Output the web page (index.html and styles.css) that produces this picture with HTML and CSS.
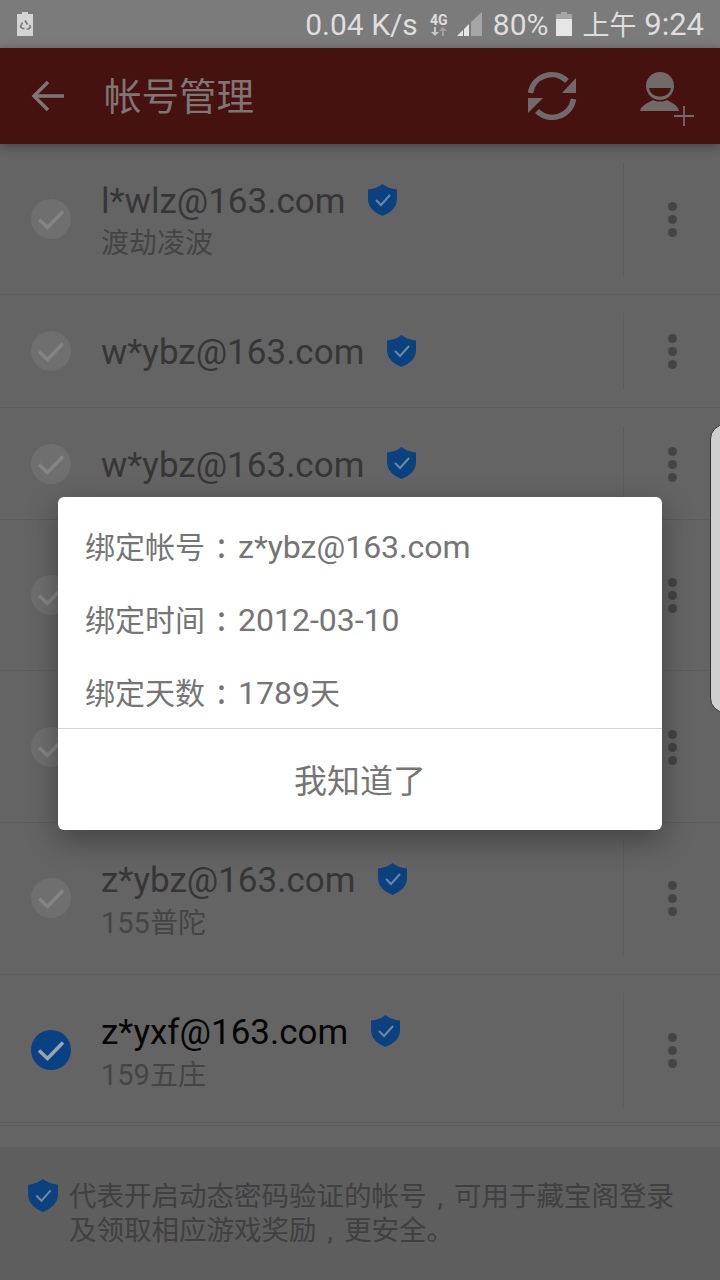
FILE: index.html
```html
<!DOCTYPE html>
<html lang="zh-CN">
<head>
    <meta charset="UTF-8">
    <meta name="viewport" content="width=device-width, initial-scale=1.0">
    <title>帐号管理</title>
    <link rel="stylesheet" href="styles.css">
</head>
<body>
<svg class="defs" width="0" height="0">
    <symbol id="shield" viewBox="0 0 29 32">
        <path d="M14.500 0C18 3 23 5 29 5.500V15C29 23 23 28.500 14.500 32C6 28.500 0 23 0 15V5.500C6 5 11 3 14.500 0Z" fill="currentColor"/>
        <path d="M8 16l5 5 9-10" fill="none" stroke="#6d87a5" stroke-width="2"/>
    </symbol>
    <symbol id="check" viewBox="0 0 40 40">
        <circle cx="20" cy="20" r="20" fill="currentColor"/>
        <path d="M8 20.500l8.500 8L32 12.500" fill="none" stroke="var(--tick)" stroke-width="3.600"/>
    </symbol>
</svg>

<div class="status">
    <svg class="recycle" width="16" height="24" viewBox="0 0 16 24">
        <path d="M5 0h6v2h5v22H0V2h5z" fill="#d4d4d4"/>
        <path d="M8 8.500l2.500 4M5.500 10.500l-2 4 2 2h2M12.500 13l1 2-2 2h-2" fill="none" stroke="#777" stroke-width="1.600"/>
    </svg>
    <div class="status-right">
        <span>0.04 K/s</span>
        <div class="net">
            <span class="net-label">4G</span>
            <svg width="16" height="9" viewBox="0 0 16 9">
                <path d="M3 0h2v5h3L4 9 0 5h3z" fill="#c8c8c8"/>
                <path d="M11 9h2V4h3l-4-4-4 4h3z" fill="#a0a0a0"/>
            </svg>
        </div>
        <svg class="signal" width="25" height="24" viewBox="0 0 25 24">
            <path d="M14 24V10L25 0v24z" fill="#a6a6a6"/>
            <path d="M0 24l6-6v6zM7 24v-7l5-5v12z" fill="#e6e6e6"/>
        </svg>
        <span class="battery-pct">80%</span>
        <svg class="battery" width="16" height="24" viewBox="0 0 16 24">
            <path d="M5 0h6v2h5v5H0V2h5z" fill="#a6a6a6"/>
            <path d="M0 7h16v17H0z" fill="#e6e6e6"/>
        </svg>
        <span class="clock"><span class="clock-cjk">上午</span> 9:24</span>
    </div>
</div>

<div class="header">
    <svg class="back" width="34" height="32" viewBox="0 0 34 32">
        <path d="M33 16H3M17 2L3 16l14 14" fill="none" stroke="#7f7674" stroke-width="3.500"/>
    </svg>
    <div class="title">帐号管理</div>
    <svg class="refresh" width="50" height="50" viewBox="0 0 50 50">
        <path d="M3.500 22A21.500 21.500 0 0 1 40 10" fill="none" stroke="#716a69" stroke-width="5.500"/>
        <path d="M46.500 28A21.500 21.500 0 0 1 10 40" fill="none" stroke="#716a69" stroke-width="5.500"/>
        <path d="M49 7v15H35zM1 42V27h15z" fill="#716a69"/>
    </svg>
    <svg class="add-user" width="56" height="56" viewBox="0 0 56 56">
        <circle cx="20" cy="14" r="14" fill="#716a69"/>
        <path d="M9 16H31C30 22 25 24.500 20 24.500C15 24.500 10 22 9 16z" fill="#46120f"/>
        <path d="M0 39C1 33 8 31 13 28C17 30 23 30 27 28C32 31 38 33 39 39z" fill="#716a69"/>
        <path d="M44 34v20M34 44h20" fill="none" stroke="#716a69" stroke-width="1.800"/>
    </svg>
</div>

<div class="list">
    <div class="row row-tall">
        <svg class="check"><use href="#check"/></svg>
        <div class="info">
            <div class="email-line"><span class="email">l*wlz@163.com</span><svg class="shield"><use href="#shield"/></svg></div>
            <div class="sub">渡劫凌波</div>
        </div>
        <div class="more"><i></i><i></i><i></i></div>
    </div>
    <div class="row">
        <svg class="check"><use href="#check"/></svg>
        <div class="info">
            <div class="email-line"><span class="email">w*ybz@163.com</span><svg class="shield"><use href="#shield"/></svg></div>
        </div>
        <div class="more"><i></i><i></i><i></i></div>
    </div>
    <div class="row row-short">
        <svg class="check"><use href="#check"/></svg>
        <div class="info">
            <div class="email-line"><span class="email">w*ybz@163.com</span><svg class="shield"><use href="#shield"/></svg></div>
        </div>
        <div class="more"><i></i><i></i><i></i></div>
    </div>
    <div class="row row-tall">
        <svg class="check"><use href="#check"/></svg>
        <div class="info"></div>
        <div class="more"><i></i><i></i><i></i></div>
    </div>
    <div class="row row-wide">
        <svg class="check"><use href="#check"/></svg>
        <div class="info"></div>
        <div class="more"><i></i><i></i><i></i></div>
    </div>
    <div class="row row-wide row-pad">
        <svg class="check"><use href="#check"/></svg>
        <div class="info">
            <div class="email-line"><span class="email">z*ybz@163.com</span><svg class="shield"><use href="#shield"/></svg></div>
            <div class="sub"><span class="num">155</span>普陀</div>
        </div>
        <div class="more"><i></i><i></i><i></i></div>
    </div>
    <div class="row row-tall selected">
        <svg class="check"><use href="#check"/></svg>
        <div class="info">
            <div class="email-line"><span class="email">z*yxf@163.com</span><svg class="shield"><use href="#shield"/></svg></div>
            <div class="sub"><span class="num">159</span>五庄</div>
        </div>
        <div class="more"><i></i><i></i><i></i></div>
    </div>
</div>

<div class="footer">
    <svg class="footer-shield"><use href="#shield"/></svg>
    <div class="footer-text">
        <div>代表开启动态密码验证的帐号<span class="comma">,</span>可用于藏宝阁登录</div>
        <div>及领取相应游戏奖励<span class="comma">,</span>更安全。</div>
    </div>
</div>

<div class="edge-panel"></div>

<div class="dialog">
    <div class="dialog-body">
        <div class="dialog-line">绑定帐号<span class="colon">:</span><span class="val">z*ybz@163.com</span></div>
        <div class="dialog-line">绑定时间<span class="colon">:</span><span class="val">2012-03-10</span></div>
        <div class="dialog-line">绑定天数<span class="colon">:</span><span class="val">1789</span>天</div>
    </div>
    <div class="dialog-btn">我知道了</div>
</div>
</body>
</html>
```

FILE: styles.css
```css
* {
    margin: 0;
    padding: 0;
    box-sizing: border-box;
}
body {
    position: relative;
    width: 720px;
    height: 1280px;
    overflow: hidden;
    background: #646464;
    font-family: Roboto, "Noto Sans CJK SC", sans-serif;
}
.defs {
    position: absolute;
}
.status {
    height: 48px;
    background: #7b7b7b;
    color: #dedede;
    font-size: 30px;
    line-height: 44px;
    display: flex;
    align-items: center;
    justify-content: space-between;
    padding: 0 16px 0 17px;
}
.status-right {
    display: flex;
    align-items: center;
}
.status-right > span {
    padding-top: 2px;
}
.net {
    margin-left: 12px;
    display: flex;
    flex-direction: column;
    align-items: center;
    width: 18px;
}
.net-label {
    font-size: 14px;
    font-weight: 700;
    line-height: 14px;
}
.signal {
    margin-left: 9px;
}
.battery-pct {
    margin-left: 11px;
}
.battery {
    margin-left: 7px;
}
.clock {
    margin-left: 11px;
    font-size: 31px;
}
.clock-cjk {
    font-size: 27px;
}
.header {
    position: relative;
    height: 96px;
    background: #46120f;
    display: flex;
    align-items: center;
    padding-left: 31px;
    box-shadow: 0 2px 10px rgba(0, 0, 0, 0.35);
}
.title {
    margin-left: 39px;
    font-size: 37.500px;
    line-height: 44px;
    margin-top: 2px;
    color: #7f7674;
}
.refresh {
    margin-left: 273px;
}
.add-user {
    margin-left: 63px;
    margin-top: 8px;
}
.row {
    height: 113px;
    display: flex;
    align-items: center;
    border-bottom: 1px solid #5c5c5c;
    color: #363636;
    --tick: #848484;
}
.row-short {
    height: 112px;
}
.row-tall {
    height: 151px;
}
.row-wide {
    height: 152px;
}
.row-pad {
    padding-bottom: 1px;
}
.check {
    width: 40px;
    height: 40px;
    margin-left: 31px;
    color: #6f6f6f;
    flex-shrink: 0;
}
.info {
    flex: 1;
    margin-left: 30px;
    padding-top: 4px;
}
.email-line {
    display: flex;
    align-items: center;
}
.email {
    font-size: 35px;
    line-height: 46px;
}
.shield {
    width: 29px;
    height: 32px;
    margin-left: 23px;
    margin-top: -5px;
    color: #0c4180;
}
.sub {
    font-size: 28px;
    height: 38px;
    line-height: 38px;
    color: #444;
}
.num {
    font-size: 29px;
}
.more {
    width: 97px;
    align-self: stretch;
    margin: 18px 0 17px;
    border-left: 1px solid #5c5c5c;
    display: flex;
    flex-direction: column;
    align-items: center;
    justify-content: center;
    gap: 4px;
}
.more i {
    width: 9px;
    height: 9px;
    border-radius: 50%;
    background: #444;
}
.selected {
    box-shadow: inset 0 -2px 0 #646464, inset 0 -3px 0 #5c5c5c;
}
.selected .email {
    color: #060606;
}
.selected .check {
    color: #0a4084;
    --tick: #98a4b2;
}
.footer {
    position: absolute;
    left: 0;
    right: 0;
    bottom: 0;
    height: 133px;
    background: #5e5e5e;
    display: flex;
    padding: 32px 0 0 28px;
}
.footer-shield {
    width: 30px;
    height: 33px;
    color: #0c4180;
    flex-shrink: 0;
}
.footer-text {
    margin: 1px 0 0 11px;
    font-size: 27.500px;
    line-height: 34px;
    color: #404040;
}
.comma {
    display: inline-block;
    width: 1em;
    text-align: center;
}
.edge-panel {
    position: absolute;
    right: -20px;
    top: 424px;
    width: 30px;
    height: 289px;
    background: #d0d0d0;
    border: 1px solid #333;
    border-radius: 22px;
}
.dialog {
    position: absolute;
    left: 58px;
    top: 497px;
    width: 604px;
    height: 333px;
    background: #fff;
    border-radius: 6px;
    box-shadow: 0 10px 30px rgba(0, 0, 0, 0.35);
    color: #757575;
}
.dialog-body {
    height: 232px;
    border-bottom: 1px solid #d2d2d2;
    padding: 10px 0 0 27px;
}
.dialog-line {
    height: 73px;
    font-size: 30px;
    line-height: 73px;
}
.colon {
    display: inline-block;
    width: 33px;
    text-align: center;
    font-family: "Noto Sans CJK SC", sans-serif;
    font-size: 34px;
}
.val {
    font-size: 32px;
}
.dialog-btn {
    height: 100px;
    display: flex;
    align-items: center;
    justify-content: center;
    font-size: 33px;
}
```
